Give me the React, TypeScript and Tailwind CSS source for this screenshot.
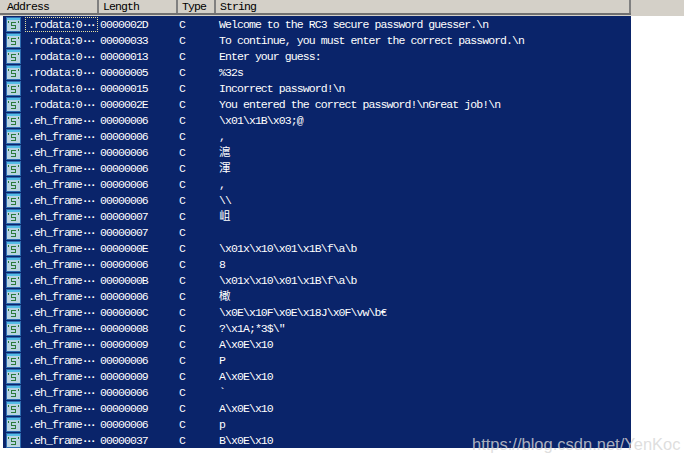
import React from 'react';

const rows: [string, string, string, string][] = [
  ['.rodata:0', '0000002D', 'C', 'Welcome to the RC3 secure password guesser.\\n'],
  ['.rodata:0', '00000033', 'C', 'To continue, you must enter the correct password.\\n'],
  ['.rodata:0', '00000013', 'C', 'Enter your guess:'],
  ['.rodata:0', '00000005', 'C', '%32s'],
  ['.rodata:0', '00000015', 'C', 'Incorrect password!\\n'],
  ['.rodata:0', '0000002E', 'C', 'You entered the correct password!\\nGreat job!\\n'],
  ['.eh_frame', '00000006', 'C', '\\x01\\x1B\\x03;@'],
  ['.eh_frame', '00000006', 'C', ','],
  ['.eh_frame', '00000006', 'C', '滬'],
  ['.eh_frame', '00000006', 'C', '渾'],
  ['.eh_frame', '00000006', 'C', ','],
  ['.eh_frame', '00000006', 'C', '\\\\'],
  ['.eh_frame', '00000007', 'C', '岨'],
  ['.eh_frame', '00000007', 'C', ''],
  ['.eh_frame', '0000000E', 'C', '\\x01x\\x10\\x01\\x1B\\f\\a\\b'],
  ['.eh_frame', '00000006', 'C', '8'],
  ['.eh_frame', '0000000B', 'C', '\\x01x\\x10\\x01\\x1B\\f\\a\\b'],
  ['.eh_frame', '00000006', 'C', '橄'],
  ['.eh_frame', '0000000C', 'C', '\\x0E\\x10F\\x0E\\x18J\\x0F\\vw\\b€'],
  ['.eh_frame', '00000008', 'C', '?\\x1A;*3$\\"'],
  ['.eh_frame', '00000009', 'C', 'A\\x0E\\x10'],
  ['.eh_frame', '00000006', 'C', 'P'],
  ['.eh_frame', '00000009', 'C', 'A\\x0E\\x10'],
  ['.eh_frame', '00000006', 'C', '`'],
  ['.eh_frame', '00000009', 'C', 'A\\x0E\\x10'],
  ['.eh_frame', '00000006', 'C', 'p'],
  ['.eh_frame', '00000037', 'C', 'B\\x0E\\x10'],
];

const StringIcon = () => (
  <svg width="15" height="15" viewBox="0 0 15 15" shapeRendering="crispEdges" className="shrink-0">
    <rect x="0" y="0" width="15" height="15" fill="#2e6cb0" />
    <rect x="1" y="1" width="13" height="2" fill="#55bde6" />
    <rect x="1" y="3" width="13" height="11" fill="#b9d3e2" />
    <path d="M5 5h5v1H6v2h4v4H5v-1h4V9H5z" fill="#2c7a3a" />
    <rect x="2" y="4" width="1" height="2" fill="#2c7a3a" />
    <rect x="12" y="4" width="1" height="2" fill="#2c7a3a" />
  </svg>
);

const Head = ({ label, className }: { label: string; className: string }) => (
  <div className={`h-full border-r-2 border-[#808080] pl-[4px] flex items-center ${className}`}>{label}</div>
);

export default function App() {
  return (
    <div className="relative w-[684px] h-[462px] bg-white overflow-hidden text-[11.5px] tracking-[-0.92px] font-['Liberation_Mono','Noto_Sans_CJK_SC',monospace]">
      <div className="h-[16px] bg-[#d4d0c8]">
        <div className="h-[15px] w-[631px] text-black flex pl-[3px] border-b-2 border-[#707070]">
          <Head label="Address" className="w-[96px]" />
          <Head label="Length" className="w-[79px]" />
          <Head label="Type" className="w-[38px]" />
          <Head label="String" className="w-[415px]" />
        </div>
      </div>
      <div className="ml-[3px] w-[628px] bg-[#0a246a] text-white">
        {rows.map((r, i) => (
          <div key={i} className="h-[16px] flex items-center">
            <div className="w-[22px] pl-[3px] flex items-center">
              <StringIcon />
            </div>
            <div className={`w-[73px] h-[15px] pl-[2px] pt-px flex items-center ${i === 0 ? 'border border-dotted border-[#e8e0a0]' : 'border border-transparent'}`}>
              {r[0]}<span className="tracking-[-2.9px] font-bold">···</span>
            </div>
            <div className="w-[79px] pl-[2px] pt-[2px]">{r[1]}</div>
            <div className="w-[38px] pl-[2px] pt-[2px]">{r[2]}</div>
            <div className="flex-1 pl-[4px] pt-[2px] whitespace-pre">{r[3]}</div>
          </div>
        ))}
      </div>
      <div className="absolute left-[472px] top-[435px] text-[16.5px] tracking-normal leading-[18px] text-[#d6d6d6]/80 font-['Liberation_Sans',sans-serif]">
        https://blog.csdn.net/YenKoc
      </div>
    </div>
  );
}
